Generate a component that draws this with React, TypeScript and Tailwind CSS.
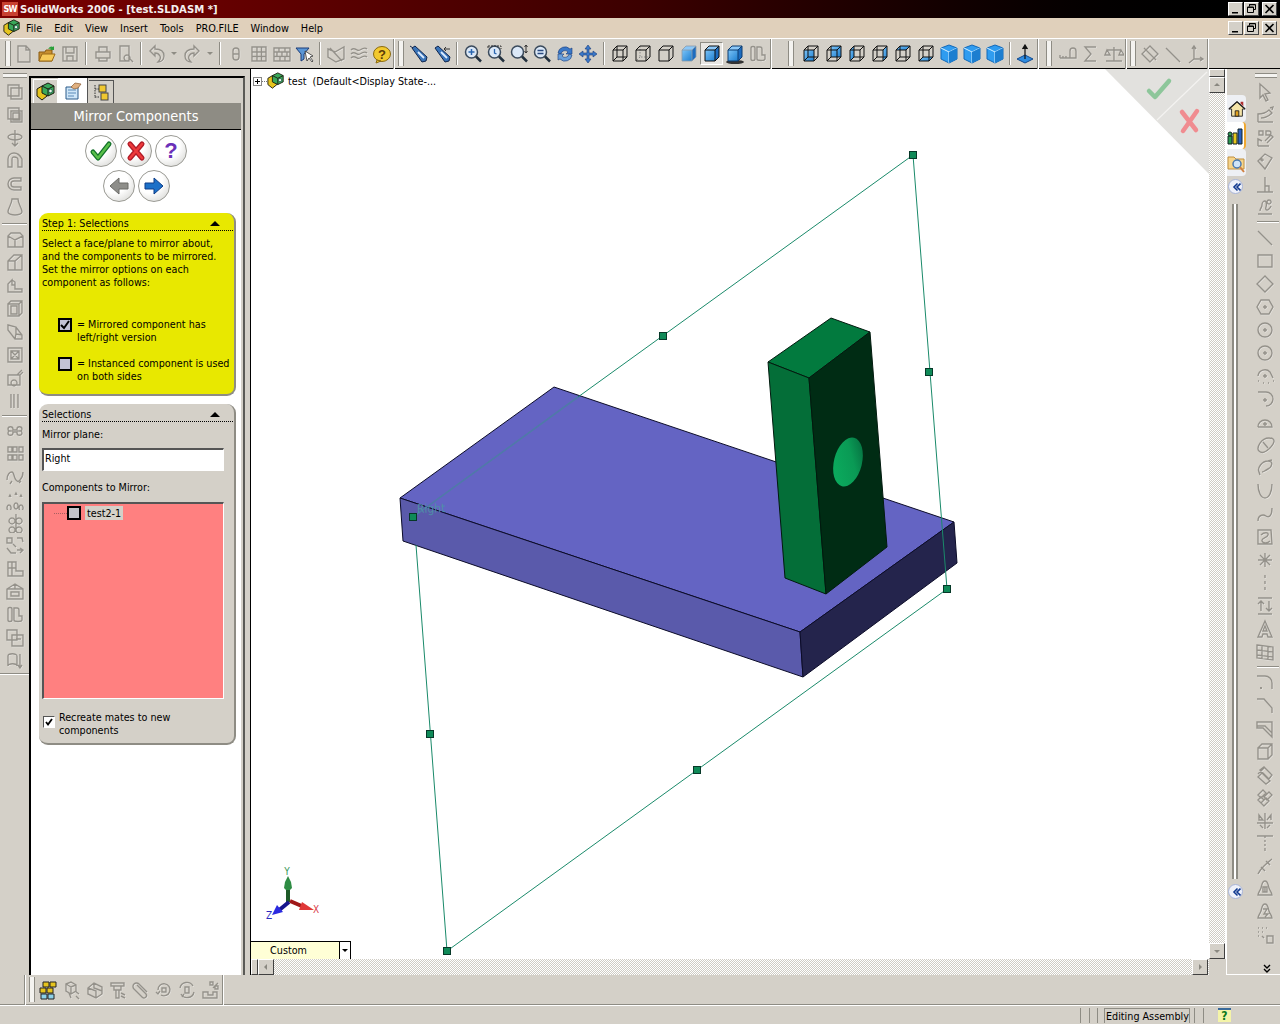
import React from "react";

const c = (x: number, y: number, r: number) => `M${x - r} ${y}a${r} ${r} 0 1 0 ${2 * r} 0a${r} ${r} 0 1 0 ${-2 * r} 0`;

const Svg = ({ children, s = 20 }: { children: React.ReactNode; s?: number }) => (
  <svg width={s} height={s} viewBox="0 0 20 20" className="block shrink-0">{children}</svg>
);

const Gray = ({ d }: { d: string }) => (
  <Svg>
    <path d={d} fill="none" stroke="#ffffff" strokeWidth="1.3" transform="translate(.6 .6)" opacity=".5" />
    <path d={d} fill="none" stroke="#94918a" strokeWidth="1.4" />
  </Svg>
);

const Asm = ({ s = 20 }: { s?: number }) => (
  <Svg s={s}>
    <path d="M1 7l5-3 5 3v7l-5 4-5-4z" fill="#e6c41e" stroke="#1c1c10" />
    <path d="M6 4l6-3 6 3v7l-6 3-6-3z" fill="#3aa85a" stroke="#1c1c10" />
    <path d="M6 4l6 3 6-3M12 7v7" fill="none" stroke="#1c1c10" />
    <circle cx="14.500" cy="9" r="1.800" fill="#e8f8e8" stroke="#144" strokeWidth=".7" />
  </Svg>
);

const Folder = () => (
  <Svg>
    <path d="M2 8h6l1-2h6v11H2z" fill="#c89030" stroke="#8a5a10" />
    <path d="M2 17l3-7h13l-3 7z" fill="#f6ca58" stroke="#9a6a18" />
    <path d="M11 5c2-3 4-3 5-2l1-1v4h-4l1-1c-1-.5-2 0-3 0z" fill="#2aa03a" />
  </Svg>
);

const Filter = () => (
  <Svg>
    <path d="M1 4h13L9 10v5l-3 2v-7z" fill="#5a96d6" stroke="#1c3c78" />
    <path d="M10 7l2 10 2-3 3 4 1-1-3-4 3-1z" fill="#fff" stroke="#333" strokeWidth=".8" />
  </Svg>
);

const Help = () => (
  <Svg>
    <ellipse cx="10" cy="10" rx="8.500" ry="7.500" fill="#f2c92e" stroke="#8a6a10" />
    <path d="M5 16l-1 3 5-2z" fill="#f2c92e" stroke="#8a6a10" />
    <text x="10" y="15" textAnchor="middle" fontSize="13" fontWeight="700" fill="#5a3c08" fontFamily="Liberation Sans, sans-serif">?</text>
  </Svg>
);

const Bottle = ({ flip }: { flip?: boolean }) => (
  <Svg>
    <path d="M3 4l3-2 12 11-1 4-4 1z" fill="#3a74b8" stroke="#10264e" />
    <path d="M9 8l6 6" stroke="#dcecff" strokeWidth="1.800" />
    {flip ? <path d="M18 5h-6l2-2m-2 2l2 2" fill="none" stroke="#333" /> : <path d="M1 2l3 2" stroke="#10264e" />}
  </Svg>
);

const Mag = ({ k }: { k: number }) => (
  <Svg>
    <circle cx="8.500" cy="8" r="6" fill="#dbe8f7" stroke="#3a4a5c" strokeWidth="1.500" />
    <path d="M13 12.500l5 5" stroke="#22303e" strokeWidth="2.500" />
    {k === 0 && <path d="M5.500 8h6M8.500 5v6" stroke="#2a66b0" strokeWidth="1.500" />}
    {k === 1 && <path d="M2 2h13v3M2 2v3" fill="none" stroke="#333" strokeDasharray="2 1" />}
    {k === 1 && <path d="M8.500 5v4l2 1" fill="none" stroke="#2a66b0" strokeWidth="1.300" />}
    {k === 2 && <path d="M17 1v8M15.500 3L17 1l1.500 2M15.500 7L17 9l1.500-2" fill="none" stroke="#333" />}
    {k === 3 && <path d="M5.500 6.500h6M5.500 9.500h6" stroke="#2a4a80" strokeWidth="1.500" />}
  </Svg>
);

const Rotate = () => (
  <Svg>
    <path d="M3 9a7 7 0 0 1 12-4l2-1v6h-6l2-2a4 4 0 0 0-7 2z" fill="#3a78c8" stroke="#1a3a78" strokeWidth=".6" />
    <path d="M17 11a7 7 0 0 1-12 4l-2 1v-6h6l-2 2a4 4 0 0 0 7-2z" fill="#6aa0dc" stroke="#1a3a78" strokeWidth=".6" />
  </Svg>
);

const Pan = () => (
  <Svg>
    <path d="M10 1l3 4h-2v4h4V7l4 3-4 3v-2h-4v4h2l-3 4-3-4h2v-4H5v2l-4-3 4-3v2h4V5H7z" fill="#3a78c8" stroke="#1a3a78" strokeWidth=".6" />
  </Svg>
);

type CubeMode = "wire" | "hlg" | "hlr" | "shade" | "shadeb" | "shadow" | "front" | "back" | "left" | "right" | "top" | "bottom" | "iso" | "tri" | "dim";

const Cube = ({ m }: { m: CubeMode }) => {
  const blue = "url(#blueG)";
  const stroke = "#111";
  if (m === "iso" || m === "tri" || m === "dim") {
    return (
      <Svg>
        <path d="M10 1l8 3v11l-8 4-8-4V4z" fill="#2f9cf0" stroke="#1268b8" />
        <path d="M2 4l8 4 8-4M10 8v11" fill="none" stroke="#d6efff" />
        <path d="M10 8l8-4v11l-8 4z" fill="#1c7ed0" />
      </Svg>
    );
  }
  const front = m === "shade" || m === "shadeb" || m === "shadow" || m === "front";
  return (
    <Svg>
      {m === "shadow" && <ellipse cx="10" cy="18" rx="9" ry="2" fill="#333" />}
      {m === "back" && <path d="M7 2h10v11H7z" fill={blue} />}
      {m === "left" && <path d="M3 6l4-4v11l-4 4z" fill={blue} />}
      {m === "bottom" && <path d="M3 17l4-4h10l-4 4z" fill={blue} />}
      {front && <path d="M3 6h10v11H3z" fill={blue} />}
      {(m === "shade" || m === "shadeb" || m === "shadow" || m === "top") && <path d="M3 6l4-4h10l-4 4z" fill={m === "top" ? blue : "#8cc8f8"} />}
      {(m === "shade" || m === "shadeb" || m === "shadow" || m === "right") && <path d="M13 6l4-4v11l-4 4z" fill={m === "right" ? blue : "#1c6cc0"} />}
      {m === "wire" || m === "right" || m === "top" || m === "left" || m === "bottom" || m === "back" || m === "front" ? (
        <path d="M7 2v11H17M7 13l-4 4" fill="none" stroke={stroke} />
      ) : null}
      {m === "hlg" && <path d="M7 2v11H17M7 13l-4 4" fill="none" stroke="#888" strokeDasharray="1.500 1.500" />}
      <path
        d="M3 6h10v11H3zM3 6l4-4h10v11l-4 4M13 6l4-4"
        fill="none"
        stroke={m === "shade" ? "#8a9aa8" : m === "shadow" ? "#0c3c70" : stroke}
        strokeWidth={m === "shade" ? 0.8 : 1}
      />
    </Svg>
  );
};

const NormalTo = () => (
  <Svg>
    <path d="M2 15l8-4 8 4-8 4z" fill="#2f8ce0" stroke="#124a90" />
    <path d="M10 15V2M7.500 5L10 1l2.500 4" fill="#111" stroke="#111" strokeWidth="1.200" />
  </Svg>
);

const G = {
  doc: "M4 2h8l4 4v12H4zM12 2v4h4",
  save: "M3 3h14v14H3zM6 3v6h8V3M7 17v-5h6v5",
  print: "M6 8V3h8v5M3 8h14v6H3zM6 14v3h8v-3",
  prev: "M4 2h9v15H4zM11 11a3 3 0 1 0 .1 0M13 14l4 4",
  undo: "M3 7l5-5v3c6 0 9 3 9 7s-3 6-6 6c2-2 3-4 2-6s-3-3-5-3v3z",
  redo: "M17 7l-5-5v3c-6 0-9 3-9 7s3 6 6 6c-2-2-3-4-2-6s3-3 5-3v3z",
  caps: "M7 7a3 3 0 0 1 6 0v6a3 3 0 0 1-6 0zM7 10h6",
  grid: "M3 3h14v14H3zM8 3v14M12.500 3v14M3 8h14M3 12.500h14",
  brick: "M2 4h16v13H2zM2 8h16M2 12.500h16M7 4v4M13 4v4M5 8v4.500M10 8v4.500M15 8v4.500M8 12.500v4.500M13 12.500v4.500",
  cross: "M2 5l7 3 9-5v12l-8 3-8-5zM4 4l12 13",
  wave: "M2 6c4-4 6 2 9 0s5-3 7-1M2 10c4-4 6 2 9 0s5-3 7-1M2 14c4-4 6 2 9 0s5-3 7-1",
  meas: "M2 14h10V7a3 3 0 0 1 6 0v7h-6M2 14v-3M5 14v-2M8 14v-2",
  sum: "M15 3H4l6 7-6 7h11",
  scale: "M2 17h16M10 3v14M3 6h14M3 6l-2 5h5zM17 6l-2 5h5z",
  ref: "M2 10l8-8 8 8-8 8zM4 4l12 12",
  axis: "M3 4l14 14",
  coord: "M8 3v12h9M8 15l-5 4M6 5l2-3 2 3M14 13l3 2-3 2",
  box1: "M3 3h11v11H3zM6 6h11v11H6z",
  box2: "M3 3h11v11H3zM6 6h11v11H6zM8 8h7v7H8z",
  rev: "M3 9a7 3 0 0 1 14 0a7 3 0 0 1-14 0M10 2v16M7 15l3 3 3-3",
  arch: "M3 16V8c0-4 3-6 6-6s6 2 8 6v8h-4V9c0-2-2-3-4-3S7 7 7 9v7z",
  cc: "M16 4H9a6 6 0 0 0 0 12h7v-3H9a3 3 0 0 1 0-6h7z",
  bell: "M7 2h6c0 5 4 9 4 13a7 3 0 0 1-14 0c0-4 4-8 4-13z",
  cham: "M6 3h9l3 3v11H3V6zM3 6l7 4 8-4M10 10v7",
  cham2: "M3 8l6-6h8v15H3zM3 8h7l7-6M10 8v9",
  step: "M3 16h14v-3H10V9H7V4L3 8zM7 4l3 2v3",
  cube: "M3 5h11v12H3zM3 5l3-3h11v12l-3 3M14 5l3-3M6 7h6v8H6z",
  skew: "M3 3l8 2 6 8v4h-7l-7-9zM11 5v7l-1 5M11 12l6 1",
  bx: "M3 3h14v14H3zM6 6l8 8M14 6l-8 8M6 6h8v8H6z",
  cam: "M3 7h12v10H3zM9 12a3 3 0 1 0 .1 0M12 7l5-5M15 7l3-3",
  dots: "M6 3v14M9 3v14M13 3v14",
  cog: "M3 8c0-3 5-3 5 0v1h4V8c0-3 5-3 5 0s-3 2-3 2 3-1 3 2-5 3-5 0v-1H8v1c0 3-5 3-5 0s3-2 3-2-3 1-3-2z",
  pat: "M3 3h4v5H3zM8 3h4v5H8zM14 3h4v5h-4zM3 11h4v5H3zM8 11h4v5H8zM14 11h4v5h-4z",
  wave2: "M2 13c0-6 3-8 5-8s2 6 4 8 2 2 4 0 3-5 3-8M5 17l2-3M14 16l2-2",
  spars: "M4 7l1-2 1 2M10 5l1-2 1 2M15 7l1-2 1 2M4 15a2 3 0 1 0 .1 0M11 13a2 3 0 1 0 .1 0M16 15a2 3 0 1 0 .1 0",
  sym: "M7 5a3 3 0 1 0 .1 0M14 5a3 3 0 1 0 .1 0M7 14a3 3 0 1 0 .1 0M14 14a3 3 0 1 0 .1 0M11 1v18",
  arr: "M2 2h5v5H2zM12 2h5l1 4M2 12l4 5h5M12 14l5 0M15 12l3 2-3 3M8 8l3 3",
  bars: "M3 3h8v9h7v5H3zM7 3v14M3 9h8",
  bars2: "M2 7l8-5 8 5v10H2zM2 7h16M6 10h8v4H6zM10 2v5",
  doub: "M3 4c0-2 4-2 4 0v11c0 2-4 2-4 0zM9 3h3a2 2 0 0 1 2 2v6h3v4c0 2-8 2-8 0z",
  over: "M2 2h10v10H2zM7 7h11v11H7zM11 11h5",
  down: "M3 5c0-3 9-3 9 0v10c0-3-9-3-9 0zM15 3v14M13 14l2 3 2-3",
  cursor: "M5 2l10 9-5 1 3 6-2 1-3-6-3 3z",
  sk: "M3 17h15M3 17V9c4 0 8-1 11-4l3 3c-3 3-8 5-11 5M15 3l3-1-1 3",
  sk3d: "M3 18h11M3 18v-7l4 2M10 13l6-6 2 2-6 6M4 3h4v4H4zM11 3h3a2 2 0 0 1 0 4h-3z",
  tag: "M3 10l7-7 7 4-7 11zM7 8a1 1 0 1 0 .1 0",
  perp: "M2 18h16M10 18V3M10 12h4v6",
  turbo: "M3 17h14M5 14c0-3 2-3 2-6s2-4 3-4 2 3 1 6 1 4 3 2 2-3 2-3M14 3a2 2 0 1 0 .1 0",
  line: "M3 3l14 14",
  rect: "M3 4h14v12H3z",
  diam: "M10 2l8 8-8 8-8-8z",
  hex: "M6 3h8l4 7-4 7H6l-4-7zM10 8v4M8 10h4",
  circ: `${c(10, 10, 7)}M10 8v4M8 10h4`,
  arcd: "M3 10a7 7 0 0 1 12-4l3 6M3 15h1M8 17h1M13 17h1M18 15h1M8 10h4M10 8v4",
  arc2: "M3 3h8a7 7 0 0 1 0 14M10 9v4M8 11h4",
  arc3: "M3 15a7 7 0 0 1 14 0H3M10 10v4M8 12h4",
  ell: "M4 16c-3-3 2-13 10-13s5 6 1 10-8 6-11 3zM8 7l5 6",
  ell2: "M4 14c-2-4 3-11 9-11s4 6 0 8-4 3-6 3M4 14l1 3M13 3l4-1",
  para: "M3 3c0 8 3 14 7 14s7-6 7-14",
  spl: "M3 17c0-6 5-7 8-5s6 0 6-8",
  spl2: "M3 3h13l1 14H3zM6 8c3-3 8-3 7 0s-7 3-6 6 6 2 8 0",
  star: "M10 3v14M3 10h14M5 5l10 10M15 5L5 15",
  dash: "M10 2v3M10 8v3M10 14v3",
  dims: "M3 2h14M3 18h14M6 5v10M14 5v10M9 8l-3-3-3 3M11 12l3 3 3-3",
  tri: "M10 2l7 16h-4l-1-3H8l-1 3H3zM10 7l-2 5h4z",
  hatch: "M2 3l16 2v13l-16-2zM2 8l16 2M2 13l16 2M7 4v13M13 4v13",
  fil: "M2 3h8a7 7 0 0 1 7 7v6M5 15h2M6 14v2",
  chm: "M2 3h7l8 9v5",
  off: "M2 3h15v15L8 9H2zM2 7h8l7 7",
  wcube: "M3 6h10v11H3zM3 6l4-4h10v11l-4 4M13 6l4-4",
  trim: "M3 12l4-4 8 8-4 3zM5 5l4-3 8 8-3 4zM3 9l6-6",
  ext: "M3 7l5-5 3 3-5 5zM9 9l5-5 3 3-5 5zM6 15l5-5 3 3-5 5zM3 12l3-3 3 3-3 3z",
  mir: "M10 2v16M2 12h16M4 9V4l4 5zM16 9V4l-4 5M5 14l3 3M15 14l-3 3",
  cen: "M2 3h16M10 3v2M10 7v2M10 11v2M10 15v3",
  dia: "M3 18c2-4 5-7 6-8s4-4 8-7M11 5l4 4M6 11l4 4",
  warn: "M10 2c3 0 3 4 4 7s3 5 3 7H3c0-2 2-4 3-7s1-7 4-7zM8 8h4v5H8zM10 8v5",
  warn2: "M10 2c3 0 3 4 4 7s3 5 3 7H3c0-2 2-4 3-7s1-7 4-7zM8 7h4l-3 5h4l-3 3",
  ddot: "M3 3h1M7 3h1M11 3h1M3 7h1M7 7h1M3 11h1M7 11l2 2M12 11h6v7h-6z",
  cnut: "M4 4l5-2 5 3v6l-5 3-5-3zM4 4l5 3 5-2M9 7v7M7 13l2 5M13 11l4 3M14 16l3 3",
  bolt: "M3 3h13v3H3zM6 6v4h7V6M8 10v8h3v-8M13 13l4 2M13 16l4 2",
  clip: "M6 5l9 9a2.500 2.500 0 0 1-4 3L3 9a3.500 3.500 0 0 1 5-5l8 8",
  rot: "M4 10a6 6 0 1 1 3 5M2 12l2 2 2-3M8 8h4v4H8z",
  rot2: "M3 8a7 7 0 0 1 13-2M5 17l2-3M17 12a7 7 0 0 1-13 2M8 7h4v6H8z",
  exp: "M3 18h14v-6h-4v3H8v-3H3zM13 8l5-5M10 2h3v3h-3zM15 6h3v3h-3z",
  brk: "M3 8l6-5 8 4v7l-6 4-8-4zM9 3v5l8 3M3 8l8 3v7",
  brk2: "M3 9l7-6 7 4v7l-7 4-7-4zM7 8l6 3v4",
};
type K = keyof typeof G;

const Tb = ({ children, sel }: { children: React.ReactNode; sel?: boolean }) => (
  <div className={sel ? "w-[23px] h-[23px] flex items-center justify-center border border-[#fff] border-t-[#8e8c84] border-l-[#8e8c84] bg-[#e8e6e2]" : "w-[23px] h-[23px] flex items-center justify-center"}>{children}</div>
);
const Gt = ({ k }: { k: K }) => <Tb><Gray d={G[k]} /></Tb>;
const Sep = ({ w }: { w: string }) => (
  <div className={w + " h-[23px] flex justify-center shrink-0"}><div className="w-[2px] h-full border-l border-[#8e8c84] border-r-0 bg-white" /></div>
);
const Grip = ({ ml }: { ml: string }) => <div className={ml + " w-[6px] h-[25px] shrink-0 border-x border-[#8e8c84] bg-[#f4f3f0]"} />;
const End = ({ ml }: { ml: string }) => <div className={ml + " w-[2px] h-[30px] shrink-0 border-l border-[#8e8c84] bg-white"} />;
const Dd = ({ w }: { w: string }) => (
  <div className={w + " h-[23px] flex items-center justify-center shrink-0"}><div className="w-0 h-0 border-x-[3px] border-x-transparent border-t-[3px] border-t-[#8e8c84]" /></div>
);

const Win = ({ k }: { k: "min" | "max" | "x" }) => (
  <div className="w-[15px] h-[14px] bg-[#d4d0c8] border border-t-white border-l-white border-r-[#444] border-b-[#444] flex items-center justify-center">
    <svg width="11" height="10" viewBox="0 0 11 10">
      {k === "min" && <path d="M2 8h6v1.500H2z" fill="#000" />}
      {k === "max" && <path d="M3.500 2.500V.5h6v5h-2M1.500 3h6v5.500h-6zM3 .8h6M1.500 3.400h6" fill="none" stroke="#000" />}
      {k === "x" && <path d="M1.500 1l8 8M9.500 1l-8 8" stroke="#000" strokeWidth="1.600" />}
    </svg>
  </div>
);
const WinBtns = () => (
  <div className="ml-auto mr-[3px] flex">
    <Win k="min" /><div className="w-px" /><Win k="max" /><div className="w-[3px]" /><Win k="x" />
  </div>
);

const menu = ["File", "Edit", "View", "Insert", "Tools", "PRO.FILE", "Window", "Help"];

const leftA: K[] = ["box1", "box2", "rev", "arch", "cc", "bell"];
const leftB: K[] = ["cham", "cham2", "step", "cube", "skew", "bx", "cam", "dots"];
const leftC: K[] = ["cog", "pat", "wave2", "spars", "sym", "arr", "bars", "bars2", "doub", "over", "down"];
const rightA: K[] = ["cursor", "sk", "sk3d", "tag", "perp", "turbo"];
const rightB: K[] = ["line", "rect", "diam", "hex", "circ", "circ", "arcd", "arc2", "arc3", "ell", "ell2", "para", "spl", "spl2", "star", "dash", "dims", "tri", "hatch"];
const rightC: K[] = ["fil", "chm", "off", "wcube", "trim", "ext", "mir", "cen", "dia", "warn", "warn2", "ddot"];
const bottom: K[] = ["cnut", "brk", "bolt", "clip", "rot", "rot2", "exp"];

const Rule = ({ h, w }: { h: string; w: string }) => (
  <div className={h + " flex items-center justify-center"}><div className={w + " h-[2px] border-b border-white bg-[#8e8c84]"} /></div>
);

const Chevrons = () => (
  <svg width="10" height="10" viewBox="0 0 10 10">
    <path d="M6.500 1.500L3 5l3.500 3.500M9.500 1.500L6 5l3.500 3.500" fill="none" stroke="#123a90" strokeWidth="1.600" />
  </svg>
);
const Collapse = () => (
  <div className="w-[15px] h-[15px] rounded-full bg-[#eef1fa] border border-[#a8b4d8] flex items-center justify-center"><Chevrons /></div>
);

const Round = ({ children }: { children: React.ReactNode }) => (
  <div className="w-[32px] h-[32px] rounded-full border border-[#9a9a94] bg-[radial-gradient(circle_at_35%_30%,#ffffff_45%,#cfcfcb_100%)] flex items-center justify-center">{children}</div>
);

const CollapseRow = ({ text }: { text: string }) => (
  <div className="h-[15px] flex items-center justify-between pr-[13px] border-b border-dotted border-black">
    <span>{text}</span>
    <div className="w-0 h-0 border-x-[5px] border-x-transparent border-b-[5px] border-b-black" />
  </div>
);

const Hatch = "bg-[repeating-conic-gradient(#cfccc4_0_25%,#ffffff_0_50%)] bg-[length:2px_2px]";

const SB = ({ dir }: { dir: "u" | "d" | "l" | "r" }) => (
  <div className="w-[16px] h-[16px] shrink-0 bg-[#d4d0c8] border border-t-white border-l-white border-r-[#404040] border-b-[#404040] flex items-center justify-center">
    <svg width="8" height="8" viewBox="0 0 8 8">
      <path d={dir === "u" ? "M4 2l3 3H1z" : dir === "d" ? "M1 3h6L4 6z" : dir === "l" ? "M5 1v6L2 4z" : "M3 1v6l3-3z"} fill="#8a8880" />
    </svg>
  </div>
);

const Handle = ({ x, y }: { x: number; y: number }) => (
  <rect x={x - 3.500} y={y - 3.500} width="7" height="7" fill="#0f8a58" stroke="#063828" strokeWidth="1" />
);

const Viewport = () => (
  <svg width="958" height="890" viewBox="251 69 958 890" className="absolute inset-0 block">
    <defs>
      <linearGradient id="hole" x1="0" y1="1" x2="1" y2="0">
        <stop offset="0" stopColor="#0bb060" />
        <stop offset=".6" stopColor="#0a9a55" />
        <stop offset="1" stopColor="#04633a" />
      </linearGradient>
    </defs>
    {/* confirmation corner */}
    <path d="M1105 69H1209V174z" fill="#e2e1de" />
    <path d="M1207 72L1157 120" stroke="#f4f3f1" strokeWidth="1.200" />
    <path d="M1149 91l6 6 14-16" fill="none" stroke="#8dc69a" strokeWidth="4.500" strokeLinecap="round" strokeLinejoin="round" />
    <path d="M1182 112l14 18M1197 111l-14 20" fill="none" stroke="#f08c90" strokeWidth="4.500" strokeLinecap="round" />

    {/* plate */}
    <path d="M400 498L554 387L954 522L800 632z" fill="#6464c3" stroke="#0b0b28" strokeWidth="1" />
    <path d="M400 498L403 541L803 677L800 632z" fill="#5a5aab" stroke="#0b0b28" strokeWidth="1" />
    <path d="M800 632L803 677L957 563L954 522z" fill="#24244c" stroke="#0b0b28" strokeWidth="1" />
    <path d="M578 397L413 517" stroke="#4f7aa8" strokeWidth="1.600" />
    <text x="417" y="513" fontSize="12" fill="#4f8ea8" fontFamily="DejaVu Sans, sans-serif" transform="rotate(-2 417 513)">Right</text>

    {/* block */}
    <path d="M768 362L831 318L870 332L809 378z" fill="#027a3e" stroke="#021a0e" />
    <path d="M768 362L809 378L826 594L785 578z" fill="#046e38" stroke="#021a0e" />
    <path d="M809 378L870 332L887 547L826 594z" fill="#002c14" stroke="#021a0e" />
    <ellipse cx="848" cy="462" rx="14" ry="25" transform="rotate(14 848 462)" fill="url(#hole)" />

    {/* plane */}
    <path d="M578 397L913 155L947 589" fill="none" stroke="#1a8a6a" strokeWidth="1" />
    <path d="M947 589L697 770L447 951L416 545" fill="none" stroke="#1a8a6a" strokeWidth="1" />
    <Handle x={913} y={155} />
    <Handle x={663} y={336} />
    <Handle x={929} y={372} />
    <Handle x={947} y={589} />
    <Handle x={413} y={517} />
    <Handle x={430} y={734} />
    <Handle x={697} y={770} />
    <Handle x={447} y={951} />

    {/* triad */}
    <path d="M288 902V888" stroke="#1e5a28" strokeWidth="4" />
    <path d="M288 876l3 6 1 6-2 2h-4l-2-2 1-6z" fill="#2e8c44" />
    <path d="M290 901L304 907" stroke="#a01818" strokeWidth="4" />
    <path d="M314 910l-12-8-3 8z" fill="#e03838" />
    <path d="M289 902L278 911" stroke="#16168c" strokeWidth="4" />
    <path d="M272 915l5-10 6 7z" fill="#2a2ae0" />
    <text x="287" y="875" textAnchor="middle" fontSize="10" fill="#3a9a5a" fontFamily="DejaVu Sans, sans-serif">Y</text>
    <text x="316" y="913" textAnchor="middle" fontSize="10" fill="#d8404a" fontFamily="DejaVu Sans, sans-serif">X</text>
    <text x="269" y="919" textAnchor="middle" fontSize="10" fill="#2a2ac0" fontFamily="DejaVu Sans, sans-serif">Z</text>
  </svg>
);

const TabBtn = ({ children, active }: { children: React.ReactNode; active?: boolean }) => (
  <div className={active ? "w-[19px] h-[27px] bg-white rounded-r-[4px] border-r-2 border-[#f0a830] flex items-center justify-center" : "w-[19px] h-[27px] bg-[#eef0f4] rounded-r-[4px] flex items-center justify-center"}>{children}</div>
);

export default function App() {
  return (
    <div className="w-[1280px] h-[1024px] overflow-hidden flex flex-col bg-[#d4d0c8] text-[10.700px] leading-[13px] text-black font-['DejaVu_Sans_Condensed','DejaVu_Sans',sans-serif] [font-stretch:condensed]">
      {/* title bar */}
      <div className="h-[18px] shrink-0 flex items-center bg-gradient-to-r from-[#7c0000] via-[#3c0000] to-[#000000]">
        <div className="ml-[2px] w-[16px] h-[14px] bg-[#c84030] flex items-center justify-center text-[9px] leading-none font-bold text-white tracking-[-1px]">SW</div>
        <div className="ml-[2px] mt-px text-[#f4eeee] font-bold text-[11.200px]">SolidWorks 2006 - [test.SLDASM *]</div>
        <WinBtns />
      </div>
      {/* menu */}
      <div className="h-[20px] shrink-0 flex items-center bg-[#e0d0bb] pl-[3px]">
        <Asm s={18} />
        <div className="ml-[5px] flex gap-[12px] text-[10.800px]">
          {menu.map((m) => <span key={m}>{m}</span>)}
        </div>
        <WinBtns />
      </div>
      {/* toolbar */}
      <div className="h-[31px] shrink-0 flex items-center pl-[5px] border-t border-white border-b border-b-black">
        <Grip ml="" />
        <div className="w-px" />
        <Gt k="doc" /><Tb><Folder /></Tb><Gt k="save" /><Sep w="w-[10px]" /><Gt k="print" /><Gt k="prev" /><Sep w="w-[8px]" />
        <Gt k="undo" /><Dd w="w-[12px]" /><Gt k="redo" /><Dd w="w-[13px]" /><Sep w="w-[8px]" />
        <Gt k="caps" /><Gt k="grid" /><Gt k="brick" /><Tb><Filter /></Tb><Sep w="w-[8px]" />
        <Gt k="cross" /><Gt k="wave" /><Tb><Help /></Tb><End ml="" />
        <Grip ml="ml-[3px]" />
        <div className="w-[3px]" />
        <Tb><Bottle /></Tb><Tb><Bottle flip /></Tb><Sep w="w-[8px]" />
        <Tb><Mag k={0} /></Tb><Tb><Mag k={1} /></Tb><Tb><Mag k={2} /></Tb><Tb><Mag k={3} /></Tb><Tb><Rotate /></Tb><Tb><Pan /></Tb><Sep w="w-[9px]" />
        <Tb><Cube m="wire" /></Tb><Tb><Cube m="hlg" /></Tb><Tb><Cube m="hlr" /></Tb><Tb><Cube m="shade" /></Tb><Tb sel><Cube m="shadeb" /></Tb><Tb><Cube m="shadow" /></Tb><Gt k="doub" /><End ml="ml-px" />
        <Grip ml="ml-[16px]" />
        <div className="w-[5px]" />
        <Tb><Cube m="front" /></Tb><Tb><Cube m="back" /></Tb><Tb><Cube m="left" /></Tb><Tb><Cube m="right" /></Tb><Tb><Cube m="top" /></Tb><Tb><Cube m="bottom" /></Tb><Tb><Cube m="iso" /></Tb><Tb><Cube m="tri" /></Tb><Tb><Cube m="dim" /></Tb><Sep w="w-[7px]" />
        <Tb><NormalTo /></Tb><End ml="ml-px" />
        <Grip ml="ml-[7px]" />
        <div className="w-[4px]" />
        <Gt k="meas" /><Gt k="sum" /><Gt k="scale" /><End ml="" />
        <Grip ml="ml-[3px]" />
        <div className="w-[2px]" />
        <Gt k="ref" /><Gt k="axis" /><Gt k="coord" /><End ml="" />
      </div>

      {/* main */}
      <div className="h-[906px] shrink-0 flex">
        {/* left toolbar */}
        <div className="w-[29px] shrink-0 flex flex-col items-stretch">
          <div className="h-[11.500px] flex items-center justify-center"><div className="w-[24px] h-[5px] border-y border-[#8e8c84] bg-[#f4f3f0] mt-[2px]" /></div>
          {leftA.map((k, i) => <div key={i} className="h-[23px] flex items-center justify-center"><Gray d={G[k]} /></div>)}
          <Rule h="h-[10px]" w="w-[25px]" />
          {leftB.map((k, i) => <div key={i} className="h-[23px] flex items-center justify-center"><Gray d={G[k]} /></div>)}
          <Rule h="h-[7px]" w="w-[25px]" />
          {leftC.map((k, i) => <div key={i} className="h-[23px] flex items-center justify-center"><Gray d={G[k]} /></div>)}
          <div className="h-[2px] border-b border-white bg-[#8e8c84]" />
        </div>

        {/* property manager */}
        <div className="w-[216px] shrink-0 pt-[7px] flex flex-col">
          <div className="flex-1 flex flex-col border-l-2 border-t-2 border-black border-r-2 border-r-[#5a5a56] pr-[2px]">
            <div className="h-[25px] shrink-0 flex items-end pl-[2px]">
              <div className="w-[25px] h-[24px] border border-white border-b-0 flex items-center justify-center"><Asm /></div>
              <div className="w-[30px] h-[25px] bg-white flex items-center justify-center border-r border-[#555]">
                <Svg>
                  <path d="M3 6h12v12H3z" fill="#cfe6f8" stroke="#2a5a8a" />
                  <path d="M5 9h8M5 12h8M5 15h6" stroke="#5a8ab8" />
                  <path d="M8 6l4-4 6 1-3 4-4 1z" fill="#e0b080" stroke="#8a5a30" strokeWidth=".7" />
                </Svg>
              </div>
              <div className="ml-[1px] w-[25px] h-[23px] border-t border-r border-[#555] flex items-center justify-center">
                <Svg>
                  <path d="M4 3v13M4 7h5M4 15h5" fill="none" stroke="#333" strokeDasharray="1.500 1" />
                  <rect x="8" y="3" width="7" height="7" fill="#f0c830" stroke="#444" />
                  <rect x="10" y="11" width="7" height="7" fill="#f0c830" stroke="#444" />
                </Svg>
              </div>
            </div>
            <div className="h-[27px] shrink-0 flex items-center justify-center bg-[#8e8c84] border-b border-black text-white text-[14.500px]">Mirror Components</div>
            <div className="flex-1 bg-white flex flex-col items-center pt-[5px]">
              <div className="flex gap-[3px]">
                <Round>
                  <svg width="24" height="24" viewBox="0 0 24 24"><path d="M4 13l5 6L20 5" fill="none" stroke="#12702a" strokeWidth="5" strokeLinecap="round" strokeLinejoin="round" /><path d="M4 13l5 6L20 5" fill="none" stroke="#5ac04a" strokeWidth="2.500" strokeLinecap="round" strokeLinejoin="round" /></svg>
                </Round>
                <Round>
                  <svg width="22" height="22" viewBox="0 0 22 22"><path d="M5 4l12 14M17 4L5 18" fill="none" stroke="#b01c28" strokeWidth="5" strokeLinecap="round" /><path d="M5 4l12 14M17 4L5 18" fill="none" stroke="#ee3a3c" strokeWidth="2.500" strokeLinecap="round" /></svg>
                </Round>
                <Round><span className="text-[22px] leading-none font-bold text-[#6a30b8] font-['Liberation_Sans',sans-serif]">?</span></Round>
              </div>
              <div className="flex gap-[3px] mt-[3px]">
                <Round>
                  <svg width="22" height="22" viewBox="0 0 22 22"><path d="M2 11l9-8v5h9v6h-9v5z" fill="#8e8e8a" stroke="#6a6a66" /></svg>
                </Round>
                <Round>
                  <svg width="22" height="22" viewBox="0 0 22 22"><path d="M20 11l-9-8v5H2v6h9v5z" fill="#1c70c8" stroke="#0c3c88" /></svg>
                </Round>
              </div>

              <div className="mt-[11px] ml-[8px] self-start w-[197px] h-[183px] shrink-0 bg-[#e8e800] rounded-[9px] border-r-2 border-b-2 border-[#8e8c84] pl-[3px] pr-[1px] pt-[3px]">
                <CollapseRow text="Step 1: Selections" />
                <div className="mt-[6px] whitespace-nowrap">
                  Select a face/plane to mirror about,<br />and the components to be mirrored.<br />Set the mirror options on each<br />component as follows:
                </div>
                <div className="mt-[29px] flex pl-[16px]">
                  <div className="w-[14px] h-[14px] shrink-0 border-2 border-black bg-[#c4c4d4] flex items-center justify-center">
                    <svg width="10" height="10" viewBox="0 0 10 10"><path d="M1 5l3 3 5-7" fill="none" stroke="#000" strokeWidth="2" /></svg>
                  </div>
                  <div className="ml-[5px] whitespace-nowrap">= Mirrored component has<br />left/right version</div>
                </div>
                <div className="mt-[13px] flex pl-[16px]">
                  <div className="w-[14px] h-[14px] shrink-0 border-2 border-black bg-[#c4c4d4]" />
                  <div className="ml-[5px] whitespace-nowrap">= Instanced component is used<br />on both sides</div>
                </div>
              </div>

              <div className="mt-[8px] ml-[8px] self-start w-[197px] h-[341px] shrink-0 bg-[#d4d0c8] rounded-[9px] border-r-2 border-b-2 border-[#8e8c84] pl-[3px] pr-[1px] pt-[3px]">
                <CollapseRow text="Selections" />
                <div className="mt-[6px]">Mirror plane:</div>
                <div className="mt-[7px] w-[182px] h-[23px] bg-white border border-t-2 border-l-2 border-[#555] border-r-white border-b-white pl-[1px] pt-[2px]">Right</div>
                <div className="mt-[10px]">Components to Mirror:</div>
                <div className="mt-[8px] w-[182px] h-[197px] bg-[#ff8080] border border-t-2 border-l-2 border-[#555] border-r-white border-b-white pt-[2px] pl-[10px]">
                  <div className="flex items-center">
                    <div className="w-[13px] border-b border-dotted border-[#a86060]" />
                    <div className="w-[14px] h-[14px] border-2 border-black bg-[#c4c4c8]" />
                    <div className="ml-[4px] h-[14px] bg-[#d4d0c8] px-[2px] flex items-center">test2-1</div>
                  </div>
                </div>
                <div className="mt-[12px] flex">
                  <div className="ml-[1px] mt-[5px] w-[12px] h-[12px] shrink-0 bg-white border border-t-[#555] border-l-[#555] border-r-white border-b-white flex items-center justify-center">
                    <svg width="8" height="8" viewBox="0 0 8 8"><path d="M1 4l2 2.500L7 1" fill="none" stroke="#000" strokeWidth="1.800" /></svg>
                  </div>
                  <div className="ml-[4px]">Recreate mates to new<br />components</div>
                </div>
              </div>
            </div>
            <div className="h-[1px] bg-white shrink-0" />
          </div>
        </div>

        {/* splitter */}
        <div className="w-[5px] shrink-0" />

        {/* graphics */}
        <div className="w-[976px] shrink-0 flex flex-col border-l border-black">
          <div className="h-[890px] flex">
            <div className="relative w-[958px] h-[890px] bg-white overflow-hidden">
              <Viewport />
              <div className="absolute left-[2px] top-[3px] flex items-center">
                <div className="w-[9px] h-[9px] border border-[#888] bg-white flex items-center justify-center">
                  <svg width="7" height="7" viewBox="0 0 7 7"><path d="M1 3.500h5M3.500 1v5" stroke="#000" /></svg>
                </div>
                <div className="w-[5px] border-b border-dotted border-[#777]" />
                <Asm s={18} />
                <span className="ml-[3px] mt-px whitespace-pre">test  (Default&lt;Display State-...</span>
              </div>
              <div className="absolute left-0 bottom-0 flex h-[18px] w-[100px] bg-[#ffffd6] border-t border-black">
                <div className="w-[88px] text-center text-[10.700px] leading-[18px] pr-[13px]">Custom</div>
                <div className="w-[12px] border-l border-r border-black bg-white flex items-center justify-center">
                  <div className="w-0 h-0 border-x-[3px] border-x-transparent border-t-[3px] border-t-black" />
                </div>
              </div>
            </div>
            <div className={"w-[17px] h-[890px] flex flex-col border-r border-white " + Hatch}>
              <div className="h-[8px] shrink-0 bg-[#d4d0c8] border border-t-white border-l-white border-r-[#404040] border-b-[#404040]" />
              <SB dir="u" />
              <div className="flex-1" />
              <SB dir="d" />
            </div>
          </div>
          <div className="h-[16px] flex">
            <div className={"w-[958px] h-[16px] flex " + Hatch}>
              <div className="w-[7px] h-[16px] shrink-0 bg-[#d4d0c8] border border-t-white border-l-white border-r-[#404040] border-b-[#404040]" />
              <SB dir="l" />
              <div className="flex-1" />
              <SB dir="r" />
              <div className="w-px" />
            </div>
          </div>
        </div>

        {/* right panel */}
        <div className="w-[54px] shrink-0 flex border-l border-b border-white">
          <div className="w-[27px] shrink-0 flex flex-col items-start pt-[26px]">
            <TabBtn>
              <Svg s={18}>
                <path d="M1 10l9-8 9 8h-3v8H4v-8z" fill="#f4e4a8" stroke="#222" />
                <path d="M1 10l9-8 9 8" fill="none" stroke="#222" strokeWidth="1.500" />
                <path d="M14 2h3v5l-3-3z" fill="#b03030" />
                <path d="M8 12h4v6H8z" fill="#e0a020" stroke="#222" />
              </Svg>
            </TabBtn>
            <TabBtn active>
              <Svg>
                <path d="M2 10h4v8H2z" fill="#2a9a50" stroke="#122" />
                <path d="M7 7h4v11H7z" fill="#e8c820" stroke="#122" />
                <path d="M12 3h4v15h-4z" fill="#2a60c0" stroke="#122" />
                <circle cx="4" cy="8" r="2" fill="#2a9a50" stroke="#122" />
              </Svg>
            </TabBtn>
            <TabBtn>
              <Svg>
                <path d="M1 4h6l2 2h8v10H1z" fill="#f6d48a" stroke="#c09040" />
                <circle cx="10" cy="11" r="4" fill="#cfe4f8" stroke="#4878b0" strokeWidth="1.500" />
                <path d="M13 14l4 5" stroke="#d08040" strokeWidth="2" />
              </Svg>
            </TabBtn>
            <div className="ml-[1px] mt-[3px]"><Collapse /></div>
            <div className="ml-[5px] mt-[10px] w-[6px] h-[675px] border-x-2 border-[#8e8c84] bg-white" />
            <div className="ml-[1px] mt-[5px]"><Collapse /></div>
          </div>
          <div className="w-[26px] shrink-0 flex flex-col pl-[1px]">
            <div className="h-[11.500px] flex items-center"><div className="w-[22px] h-[5px] border-y border-[#8e8c84] bg-[#f4f3f0] mt-[1px]" /></div>
            {rightA.map((k, i) => <div key={i} className="h-[23px] flex items-center justify-start"><Gray d={G[k]} /></div>)}
            <Rule h="h-[8px]" w="w-[22px]" />
            {rightB.map((k, i) => <div key={i} className="h-[23px] flex items-center justify-start"><Gray d={G[k]} /></div>)}
            <Rule h="h-[8px]" w="w-[22px]" />
            {rightC.map((k, i) => <div key={i} className="h-[23px] flex items-center justify-start"><Gray d={G[k]} /></div>)}
            <div className="mt-[17px] pl-[8px]">
              <svg width="8" height="10" viewBox="0 0 8 10"><path d="M1 1l3 3 3-3M1 5l3 3 3-3" fill="none" stroke="#000" strokeWidth="1.400" /></svg>
            </div>
          </div>
        </div>
      </div>

      {/* bottom toolbar */}
      <div className="h-[30px] shrink-0 flex items-center pl-[24px] border-b border-[#8e8c84]">
        <End ml="" />
        <Grip ml="ml-[3px]" />
        <div className="w-[2px]" />
        <Tb>
          <Svg>
            <path d="M4 2h6v5H4zM11 2h6v5h-6z" fill="#e6c41e" stroke="#222" />
            <path d="M1 8h6v5H1z" fill="#e6c41e" stroke="#222" />
            <path d="M8 8h6v5H8z" fill="#e6c41e" stroke="#222" />
            <path d="M2 14h6v5H2z" fill="#8cd0e8" stroke="#222" />
            <path d="M9 14h6v5H9z" fill="#8cd0e8" stroke="#222" />
          </Svg>
        </Tb>
        {bottom.map((k, i) => <Gt key={i} k={k} />)}
        <End ml="ml-px" />
      </div>

      {/* status bar */}
      <div className="flex-1 flex items-center border-t border-white pl-[1080px] text-[10.700px]">
        <div className="w-[9px] h-[15px] border-l border-[#8e8c84]" />
        <div className="w-[8px] h-[15px] border-l border-[#8e8c84]" />
        <div className="w-[7px] h-[15px] border-l border-[#8e8c84]" />
        <div className="w-[86px] h-[15px] border-x border-t border-[#8e8c84] leading-[15px] pl-px whitespace-nowrap">Editing Assembly</div>
        <div className="ml-[4px] w-[9px] h-[15px] border-l border-[#8e8c84]" />
        <div className="w-[9px] h-[15px] border-l border-[#8e8c84]" />
        <div className="ml-[6px] w-[13px] h-[14px] bg-[#f4f4a8] border-t-2 border-[#3a6a9a] flex items-center justify-center text-[12px] leading-none font-bold text-[#0a7a1a]">?</div>
      </div>

      <svg width="0" height="0" className="absolute">
        <defs>
          <linearGradient id="blueG" x1="0" y1="0" x2="1" y2="1">
            <stop offset="0" stopColor="#7cc4f8" />
            <stop offset="1" stopColor="#1c7ed0" />
          </linearGradient>
        </defs>
      </svg>
    </div>
  );
}
